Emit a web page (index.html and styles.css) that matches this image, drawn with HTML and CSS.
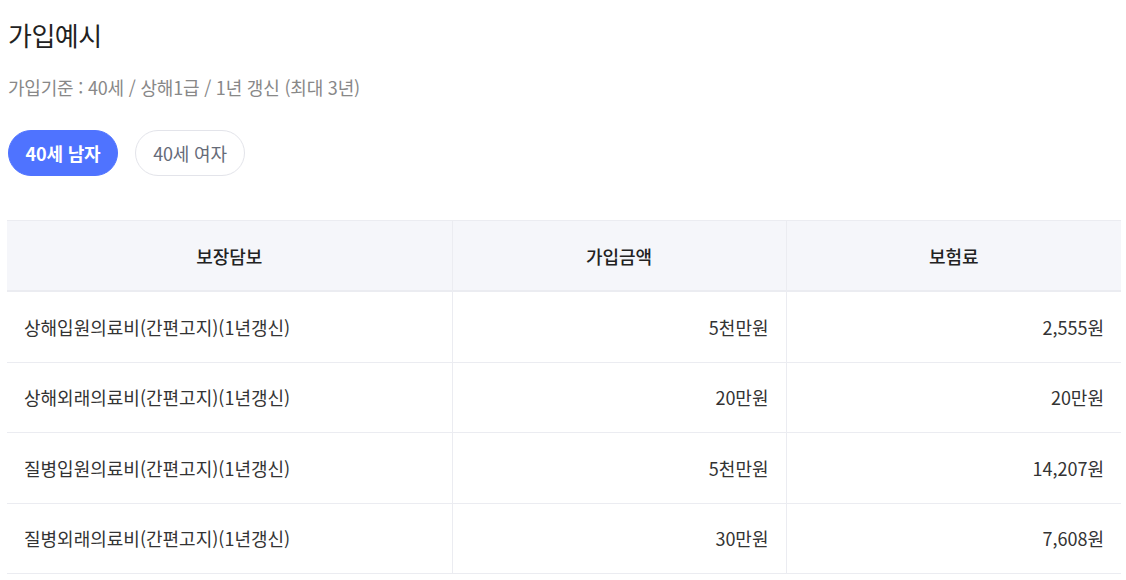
FILE: index.html
```html
<!DOCTYPE html>
<html lang="ko">
<head>
<meta charset="utf-8">
<link rel="stylesheet" href="styles.css">
</head>
<body>
<div class="wrap">
  <h2 class="title">가입예시</h2>
  <p class="sub">가입기준 : 40세 / 상해1급 / 1년 갱신 (최대 3년)</p>
  <div class="tabs">
    <button class="tab active">40세 남자</button>
    <button class="tab">40세 여자</button>
  </div>
  <table class="tbl">
    <colgroup><col class="c1"><col class="c2"><col class="c3"></colgroup>
    <thead>
      <tr><th>보장담보</th><th>가입금액</th><th>보험료</th></tr>
    </thead>
    <tbody>
      <tr><td>상해입원의료비(간편고지)(1년갱신)</td><td class="r">5천만원</td><td class="r">2,555원</td></tr>
      <tr><td>상해외래의료비(간편고지)(1년갱신)</td><td class="r">20만원</td><td class="r">20만원</td></tr>
      <tr><td>질병입원의료비(간편고지)(1년갱신)</td><td class="r">5천만원</td><td class="r">14,207원</td></tr>
      <tr><td>질병외래의료비(간편고지)(1년갱신)</td><td class="r">30만원</td><td class="r">7,608원</td></tr>
    </tbody>
  </table>
</div>
</body>
</html>
```
FILE: styles.css
```css
html, body { margin: 0; padding: 0; background: #fff; }
body { font-family: "Noto Sans CJK KR", "Noto Sans", sans-serif; color: #222; }
.wrap { width: 1114px; margin-left: 7px; padding-top: 16px; }
.title { margin: 0 0 0 1px; font-size: 26px; font-weight: 400; line-height: 38px; color: #222; letter-spacing: -0.5px; }
.sub { margin: 20px 0 0 1px; font-size: 18px; line-height: 26px; color: #888; letter-spacing: -0.2px; }
.tabs { display: flex; gap: 17px; margin-top: 30px; margin-left: 1px; }
.tab { height: 46px; padding: 0; border-radius: 23px; border: 1px solid #e3e4ea; background: #fff; font-family: inherit; font-size: 18px; color: #666b78; width: 110px; letter-spacing: -0.2px; }
.tab.active { background: #4f73ff; border-color: #4f73ff; color: #fff; font-weight: 700; }
.tbl { margin-top: 44px; width: 100%; border-collapse: collapse; table-layout: fixed; font-size: 18px; }
.c1 { width: 445px; }
.c2 { width: 334px; }
.tbl th { background: #f5f6fa; height: 69px; font-weight: 500; color: #222; border-top: 1px solid #ebecf1; border-bottom: 2px solid #ebecf1; border-left: 1px solid #ebecf1; padding: 0; }
.tbl td { height: 69.5px; padding: 0 17px; border-bottom: 1px solid #ebecf1; border-left: 1px solid #ebecf1; color: #333; }
.tbl th:first-child, .tbl td:first-child { border-left: none; }
.tbl td.r { text-align: right; }
```
